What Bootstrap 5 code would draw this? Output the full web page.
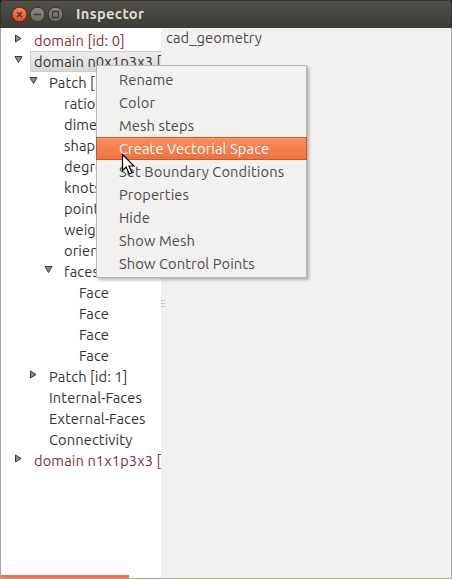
<!DOCTYPE html>
<html lang="en">
<head>
<meta charset="utf-8">
<title>Inspector</title>
<link href="https://cdn.jsdelivr.net/npm/bootstrap@5.3.0/dist/css/bootstrap.min.css" rel="stylesheet">
<style>
body{width:452px;height:579px;background:#3a1020;font-family:Ubuntu,"Noto Sans","Open Sans",sans-serif;font-size:14.67px;color:#3c3c3c;line-height:21px;letter-spacing:.11px}
.window{height:579px;border:1px solid #aca6a0;border-top:0;background:#f2f1f0;border-radius:5px 5px 0 0}
.titlebar{height:28px;margin:0 -1px;padding-left:12px;border-top:1px solid #33322e;border-radius:5px 5px 0 0;background:linear-gradient(#5b5a53 0,#504f49 1px,#3c3b37 100%);box-shadow:inset 1px 0 #35342f,inset -1px 0 #35342f}
.titlebar svg{display:block;margin-top:0}
.caption-text{font-weight:700;color:#dfdbd2;margin:-2px 0 0 12px;letter-spacing:.35px}
.tree{width:160px;background:#fff;padding-top:2px;color:#333}
.tree-row{height:21px;white-space:nowrap;padding-left:11px}
.tree-row svg{width:11px;height:11px;margin:-5px 0 0 0;flex:none}
.tree-row span{margin:-1px 0 0 11px}
.tree-row.leaf span{margin-left:22px}
.d1{padding-left:26px}.d2{padding-left:41px}.d3{padding-left:56px}
.changed{color:#853038}
.selected-row{background:linear-gradient(#f0efee,#d8d6d3) 29px 0 no-repeat}
.tree-row.selected-row span{align-self:stretch;margin:0 0 0 7px;padding-left:3px;flex:1;border:1px solid #d0cdca;border-right:0;line-height:19px}
.grip{width:5px;margin-top:272px}
.grip i{display:block;width:4px;height:1px;background:#c9c6c2;margin-bottom:2px}
.scroll-thumb{height:3px;width:128px;background:#e9794c}
.heading-area{margin-top:-1px;color:#4c4c4c}
.menu{left:96px;top:65px;width:211px;height:213px;padding:2px 0;background:#f2f1f0;border:1px solid #bab7b3;box-shadow:2px 2px 3px rgba(0,0,0,.28);color:#4c4c4c}
.menu-entry{height:23px;line-height:23px;padding-left:22px;white-space:nowrap}
.menu-entry.active{margin:0 -1px;line-height:21px;border:1px solid #c4582c;background:linear-gradient(#f88e60,#f1713d);color:#fff;box-shadow:inset 0 1px #fa9c74}
.pointer{left:121px;top:153px}
</style>
<script src="https://cdn.jsdelivr.net/npm/bootstrap@5.3.0/dist/js/bootstrap.bundle.min.js"></script>
</head>
<body class="m-0 overflow-hidden position-relative">
<svg class="position-absolute" width="0" height="0"><defs>
<linearGradient id="red" x2="0" y2="1"><stop stop-color="#f88761"/><stop offset="1" stop-color="#e4491a"/></linearGradient>
<linearGradient id="gray" x2="0" y2="1"><stop stop-color="#8d8b83"/><stop offset="1" stop-color="#68665f"/></linearGradient>
<symbol id="shut" viewBox="0 0 11 11"><path d="M3.5 2v7l5.5-3.5z" fill="#8a8a8a" stroke="#3c3c3c"/></symbol>
<symbol id="open" viewBox="0 0 11 11"><path d="M3 2.500h7L6.500 8.500z" fill="#8a8a8a" stroke="#3c3c3c"/></symbol>
</defs></svg>
<main class="window d-flex flex-column">
<header class="titlebar d-flex align-items-center flex-shrink-0">
<svg width="52" height="17" viewBox="0 0 52 17"><g stroke="#32312d"><circle cx="7.500" cy="8.500" r="7.300" fill="url(#red)" stroke="#5b2a19"/><circle cx="25.500" cy="8.500" r="7.300" fill="url(#gray)"/><circle cx="43.500" cy="8.500" r="7.300" fill="url(#gray)"/></g><path d="M5 6l5 5m0-5l-5 5M22 8.500h7M40.500 5.500h6v6h-6z" fill="none" stroke="#3c3b37" stroke-width="1.300"/></svg>
<span class="caption-text">Inspector</span>
</header>
<div class="d-flex flex-grow-1">
<nav class="tree d-flex flex-column overflow-hidden">
<div class="tree-row d-flex align-items-center changed"><svg><use href="#shut"/></svg><span>domain [id: 0]</span></div>
<div class="tree-row d-flex align-items-center selected-row"><svg><use href="#open"/></svg><span>domain n0x1p3x3 [</span></div>
<div class="tree-row d-flex align-items-center d1"><svg><use href="#open"/></svg><span>Patch [</span></div>
<div class="tree-row d-flex align-items-center d2 leaf"><span>ratio</span></div>
<div class="tree-row d-flex align-items-center d2 leaf"><span>dime</span></div>
<div class="tree-row d-flex align-items-center d2 leaf"><span>shap</span></div>
<div class="tree-row d-flex align-items-center d2 leaf"><span>degre</span></div>
<div class="tree-row d-flex align-items-center d2 leaf"><span>knots</span></div>
<div class="tree-row d-flex align-items-center d2 leaf"><span>point</span></div>
<div class="tree-row d-flex align-items-center d2 leaf"><span>weigh</span></div>
<div class="tree-row d-flex align-items-center d2 leaf"><span>orien</span></div>
<div class="tree-row d-flex align-items-center d2"><svg><use href="#open"/></svg><span>faces</span></div>
<div class="tree-row d-flex align-items-center d3 leaf"><span>Face</span></div>
<div class="tree-row d-flex align-items-center d3 leaf"><span>Face</span></div>
<div class="tree-row d-flex align-items-center d3 leaf"><span>Face</span></div>
<div class="tree-row d-flex align-items-center d3 leaf"><span>Face</span></div>
<div class="tree-row d-flex align-items-center d1"><svg><use href="#shut"/></svg><span>Patch [id: 1]</span></div>
<div class="tree-row d-flex align-items-center d1 leaf"><span>Internal-Faces</span></div>
<div class="tree-row d-flex align-items-center d1 leaf"><span>External-Faces</span></div>
<div class="tree-row d-flex align-items-center d1 leaf"><span>Connectivity</span></div>
<div class="tree-row d-flex align-items-center changed"><svg><use href="#shut"/></svg><span>domain n1x1p3x3 [</span></div>
<div class="scroll-thumb mt-auto"></div>
</nav>
<div class="grip"><i></i><i></i><i></i></div>
<section class="heading-area">cad_geometry</section>
</div>
</main>
<div class="menu position-absolute">
<div class="menu-entry">Rename</div>
<div class="menu-entry">Color</div>
<div class="menu-entry">Mesh steps</div>
<div class="menu-entry active">Create Vectorial Space</div>
<div class="menu-entry">Set Boundary Conditions</div>
<div class="menu-entry">Properties</div>
<div class="menu-entry">Hide</div>
<div class="menu-entry">Show Mesh</div>
<div class="menu-entry">Show Control Points</div>
</div>
<svg class="pointer position-absolute" width="14" height="23" viewBox="0 0 14 23"><path d="M1.500 1.500v16l3.700-3.500 3 7 2.800-1.200-3-6.800h5z" fill="#fff" stroke="#000" stroke-width="1.200"/></svg>
</body>
</html>
